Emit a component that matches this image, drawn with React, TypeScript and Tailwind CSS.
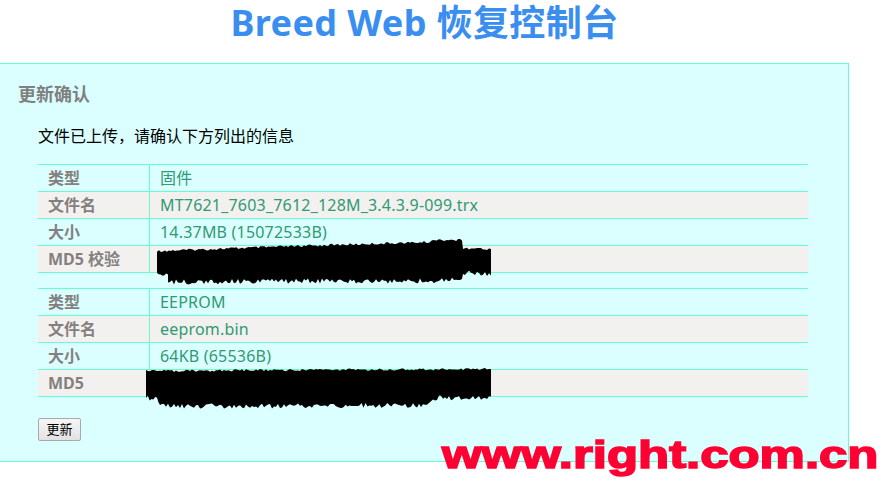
import React from 'react';

type Pt = [number, number];

const rand = (n: number) => {
  const s = Math.sin(n * 12.9898) * 43758.5453;
  return s - Math.floor(s);
};

// ragged edge along a polyline, noise goes up/down
function edge(pts: Pt[], amp: number, seed: number) {
  const out: string[] = [];
  for (let i = 0; i < pts.length - 1; i++) {
    const [x0, y0] = pts[i];
    const [x1, y1] = pts[i + 1];
    const n = Math.max(1, Math.round(Math.abs(x1 - x0) / 2));
    for (let k = 0; k < n; k++) {
      const t = k / n;
      const x = x0 + (x1 - x0) * t;
      const y = y0 + (y1 - y0) * t + (rand(seed + i * 97 + k) - 0.5) * amp * 2;
      out.push(`${x.toFixed(1)},${y.toFixed(1)}`);
    }
  }
  const last = pts[pts.length - 1];
  out.push(`${last[0]},${last[1]}`);
  return out;
}

function blob(top: Pt[], bottom: Pt[], seed: number) {
  return [...edge(top, 1.2, seed), ...edge(bottom, 2.6, seed + 5000)].join(' ');
}

const scribbles = [
  blob(
    [[157, 251], [300, 246], [430, 242], [431, 240], [462, 240], [463, 248], [491, 249]],
    [[491, 274], [463, 273], [462, 279], [440, 281], [300, 281], [168, 282], [168, 274], [157, 273]],
    11,
  ),
  blob(
    [[146, 371], [300, 370], [491, 369]],
    [[491, 397], [433, 398], [425, 405], [300, 406], [160, 406], [157, 398], [146, 398]],
    777,
  ),
];

const fileRows = [
  { label: '类型', value: '固件' },
  { label: '文件名', value: 'MT7621_7603_7612_128M_3.4.3.9-099.trx' },
  { label: '大小', value: '14.37MB (15072533B)' },
  { label: 'MD5 校验', value: '' },
];

const eepromRows = [
  { label: '类型', value: 'EEPROM' },
  { label: '文件名', value: 'eeprom.bin' },
  { label: '大小', value: '64KB (65536B)' },
  { label: 'MD5', value: '' },
];

function InfoTable({ rows }: { rows: { label: string; value: string }[] }) {
  return (
    <div className="w-[770px] border-t border-[#66ffcc]">
      {rows.map((r, i) => (
        <div
          key={i}
          className={`flex h-[27px] border-b border-[#66ffcc] ${i % 2 === 1 ? 'bg-[#f3f1ef]' : ''}`}
        >
          <div className="flex w-[112px] items-center border-r border-[#66ffcc] pl-[10px] text-[16px] font-bold text-[#858080]">
            {r.label}
          </div>
          <div className="flex flex-1 items-center pl-[10px] text-[16px] tracking-[0.2px] text-[#2f9a74]">{r.value}</div>
        </div>
      ))}
    </div>
  );
}

export default function App() {
  return (
    <div className="relative h-[483px] w-full overflow-hidden bg-white font-['Noto_Sans','Noto_Sans_CJK_SC',sans-serif]">
      <h1 className="mb-[17px] w-[849px] text-center text-[36px] font-bold leading-[46px] tracking-[0.4px] text-[#3a8ef0]">
        Breed Web 恢复控制台
      </h1>

      {/* panel */}
      <div className="w-[849px] border-y border-r border-[#66ffcc] bg-[#dbffff] pb-[20px] pl-[18px] pt-[18px]">
        <h2 className="text-[18px] font-bold leading-[24px] text-[#808080]">更新确认</h2>
        <div className="ml-[20px]">
          <p className="mt-[20px] text-[16px] leading-[20px] text-black">文件已上传，请确认下方列出的信息</p>
          <div className="mt-[18px]">
            <InfoTable rows={fileRows} />
          </div>
          <div className="mt-[15px]">
            <InfoTable rows={eepromRows} />
          </div>
          <button className="mt-[21px] flex h-[23px] w-[43px] items-center justify-center rounded-[2px] border border-[#a9a9a9] bg-gradient-to-b from-[#f6f6f6] to-[#e2e2e2] text-[13px] leading-none text-black">
            更新
          </button>
        </div>
      </div>

      {/* redaction marks */}
      <svg className="pointer-events-none absolute left-0 top-0" width="883" height="483">
        <defs>
          <filter id="soft">
            <feGaussianBlur stdDeviation="0.6" />
          </filter>
        </defs>
        {scribbles.map((p, i) => (
          <polygon key={i} points={p} fill="#000" filter="url(#soft)" />
        ))}
      </svg>

      {/* watermark */}
      <div className="pointer-events-none absolute left-[442px] top-[435px] origin-left scale-x-[1.305] whitespace-nowrap font-['Liberation_Sans',sans-serif] text-[39px] font-bold leading-none text-[#ff0033] [-webkit-text-stroke:1.6px_#ff0033]">
        www.right.com.cn
      </div>
    </div>
  );
}
